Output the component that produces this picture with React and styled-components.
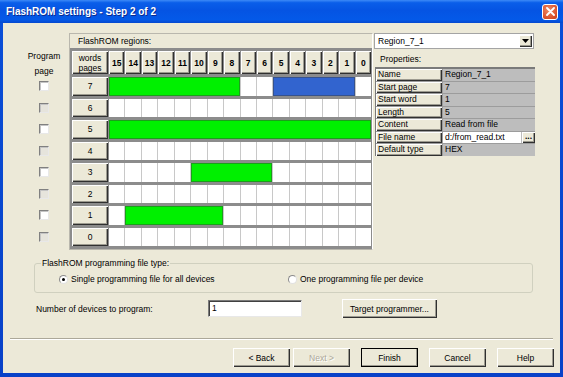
import React from "react";
import styled, { createGlobalStyle } from "styled-components";

const GREEN = "#00f000";
const BLUE = "#3264cf";

const pages = [
  { page: 7, regions: [{ from: 0, len: 8, color: GREEN }, { from: 10, len: 5, color: BLUE }] },
  { page: 6, regions: [] },
  { page: 5, regions: [{ from: 0, len: 16, color: GREEN }] },
  { page: 4, regions: [] },
  { page: 3, regions: [{ from: 5, len: 5, color: GREEN }] },
  { page: 2, regions: [] },
  { page: 1, regions: [{ from: 1, len: 6, color: GREEN }] },
  { page: 0, regions: [] },
];

const words = Array.from({ length: 16 }, (_, i) => 15 - i);

const props = [
  ["Name", "Region_7_1"],
  ["Start page", "7"],
  ["Start word", "1"],
  ["Length", "5"],
  ["Content", "Read from file"],
  ["File name", "d:/from_read.txt", true],
  ["Default type", "HEX"],
];

const GlobalStyle = createGlobalStyle`
  html, body { margin: 0; padding: 0; }
  body {
    width: 563px;
    height: 377px;
    overflow: hidden;
    background: #0842c9;
    font-family: "Liberation Sans", Arial, sans-serif;
    font-size: 8.5px;
    color: #000;
  }
  * { box-sizing: border-box; }
`;

const Window = styled.div`
  width: 563px;
  height: 377px;
  display: flex;
  flex-direction: column;
  background: linear-gradient(#0a4fd8, #0841c8);
`;

const TitleBar = styled.div`
  height: 23px;
  flex: none;
  display: flex;
  align-items: center;
  justify-content: space-between;
  padding: 0 5px 0 6px;
  background: linear-gradient(
    #3d8af7 0%,
    #0a5ee9 12%,
    #0554e3 45%,
    #0459e8 85%,
    #0448cf 100%
  );
`;

const Title = styled.span`
  color: #fff;
  font-weight: bold;
  font-size: 10px;
  text-shadow: 1px 1px #0b2a8f;
`;

const CloseBtn = styled.div`
  width: 16px;
  height: 16px;
  border: 1px solid #fff;
  border-radius: 3px;
  background: radial-gradient(circle at 40% 35%, #f08a66, #d9502a 70%, #c13d1b);
  display: flex;
  align-items: center;
  justify-content: center;
`;

const Client = styled.div`
  flex: 1;
  margin: 0 3px 4px 3px;
  background: #ece9d8;
  display: flex;
  flex-direction: column;
  padding-top: 10px;
`;

const Middle = styled.div`
  display: flex;
  align-items: flex-start;
  margin-left: 18px;
`;

const LeftCol = styled.div`
  width: 46px;
  display: flex;
  flex-direction: column;
  align-items: center;
`;

const ColHead = styled.div`
  height: 44px;
  padding-top: 16px;
  line-height: 15px;
  text-align: center;
`;

const CheckRow = styled.div`
  height: 18.5px;
  margin-bottom: 3px;
  display: flex;
  align-items: center;
  justify-content: center;
`;

const Check = styled.div`
  width: 10px;
  height: 10px;
  border: 1px solid;
  border-color: #808080 #e8e8e8 #e8e8e8 #808080;
  background: ${(p) => (p.$disabled ? "#e6e4dc" : "#fff")};
  box-shadow: inset 1px 1px #c4c4c4;
`;

const Frame = styled.div`
  width: 304px;
  margin-left: 2px;
  border: 1px solid #b9b7ad;
  border-right-color: #fff;
  background: #ece9d8;
`;

const FrameBar = styled.div`
  height: 14px;
  line-height: 14px;
  padding-left: 8px;
`;

const Table = styled.div`
  display: flex;
  flex-direction: column;
  gap: 3px;
  padding: 3px 1px 3px 2px;
  background: #8c8c8c;
`;

const raised = `
  background: #ece9d8;
  box-shadow: inset 1px 1px #fff, inset -1px -1px #303030, inset -2px -2px #9d9b90;
`;

const HeaderRow = styled.div`
  height: 23px;
  display: grid;
  grid-template-columns: 36px repeat(16, 1fr);
  column-gap: 1px;
`;

const HeadCell = styled.div`
  ${raised}
  display: flex;
  flex-direction: column;
  align-items: center;
  justify-content: center;
  font-weight: ${(p) => (p.$bold ? "bold" : "normal")};
  line-height: 10px;
  text-align: center;
`;

const DataRow = styled.div`
  height: 18.5px;
  display: grid;
  grid-template-columns: 36px 1fr;
  column-gap: 1px;
`;

const PageCell = styled.div`
  ${raised}
  display: flex;
  align-items: center;
  justify-content: center;
`;

const Cells = styled.div`
  display: grid;
  grid-template-columns: repeat(16, 1fr);
  column-gap: 1px;
  background: #c8c8c8;
`;

const Cell = styled.div`
  grid-row: 1;
  grid-column: ${(p) => p.$col};
  background: #fff;
`;

const Region = styled.div`
  grid-row: 1;
  grid-column: ${(p) => `${p.$from + 1} / span ${p.$len}`};
  background: ${(p) => p.$color};
  box-shadow: inset 0 0 0 1px rgba(60, 60, 60, 0.45);
`;

const RightPanel = styled.div`
  width: 161px;
  margin-left: 1px;
  display: flex;
  flex-direction: column;
`;

const Combo = styled.div`
  height: 16px;
  width: 160px;
  border: 1px solid #a4a4a4;
  background: #fff;
  display: flex;
  align-items: center;
  justify-content: space-between;
  padding: 0 1px 0 3px;
`;

const ComboBtn = styled.div`
  ${raised}
  width: 13px;
  height: 12px;
  display: flex;
  align-items: center;
  justify-content: center;
`;

const PropLabel = styled.div`
  height: 18px;
  line-height: 16px;
  padding: 2px 0 0 6px;
`;

const PropTable = styled.div`
  width: 160px;
  margin-left: 1px;
  display: grid;
  grid-template-columns: 66px 1fr;
  grid-auto-rows: 11.5px;
  gap: 1px;
  border-top: 2px solid #7a7a7a;
  border-left: 1px solid #7a7a7a;
  background: #9c9c9c;
`;

const PropKey = styled.div`
  ${raised}
  padding-left: 2px;
  line-height: 11.5px;
  white-space: nowrap;
`;

const PropValue = styled.div`
  background: #bdbdbd;
  padding-left: 2px;
  line-height: 11.5px;
  white-space: nowrap;
  display: flex;
  justify-content: space-between;
`;

const FileField = styled.div`
  flex: 1;
  background: #fff;
  margin: 0 1px 0 -2px;
  padding-left: 2px;
`;

const Dots = styled.div`
  ${raised}
  width: 13px;
  font-weight: bold;
  text-align: center;
  line-height: 9px;
`;

const Group = styled.fieldset`
  margin: 8px 27px 0 31px;
  padding: 0 0 2px 24px;
  border: 1px solid #d0d0bf;
  border-radius: 3px;
  min-width: 0;
`;

const Legend = styled.legend`
  margin-left: -18px;
  padding: 0 1px;
  line-height: 10px;
  font-size: 8.5px;
`;

const RadioRow = styled.div`
  height: 22px;
  display: flex;
  align-items: center;
`;

const Option = styled.label`
  display: flex;
  align-items: center;
  gap: 3px;
  width: ${(p) => p.$width || "auto"};
`;

const Radio = styled.span`
  width: 9px;
  height: 9px;
  border-radius: 50%;
  border: 1px solid #8a8a8a;
  border-bottom-color: #e0e0e0;
  border-right-color: #e0e0e0;
  background: #fff;
  display: flex;
  align-items: center;
  justify-content: center;

  &::after {
    content: "";
    width: 3px;
    height: 3px;
    border-radius: 50%;
    background: ${(p) => (p.$checked ? "#000" : "transparent")};
  }
`;

const NumberRow = styled.div`
  display: flex;
  align-items: center;
  height: 19px;
  margin-top: 6px;
  padding-left: 33px;
`;

const NumberLabel = styled.span`
  width: 172px;
`;

const Input = styled.div`
  width: 94px;
  height: 17px;
  background: #fff;
  border: 1px solid;
  border-color: #7a7a7a #e8e8e8 #e8e8e8 #7a7a7a;
  box-shadow: inset 1px 1px #404040;
  padding: 0 3px;
  line-height: 15px;
`;

const Button = styled.div`
  ${raised}
  width: ${(p) => p.$width || "57px"};
  height: 19px;
  display: flex;
  align-items: center;
  justify-content: center;
  color: ${(p) => (p.$disabled ? "#aca899" : "#000")};
  text-shadow: ${(p) => (p.$disabled ? "1px 1px #fff" : "none")};
  outline: ${(p) => (p.$default ? "1px solid #000" : "none")};
  outline-offset: -1px;
`;

const Separator = styled.div`
  margin: 20px 7px 0 7px;
  height: 2px;
  border-top: 1px solid #aca899;
  border-bottom: 1px solid #fff;
`;

const ButtonRow = styled.div`
  display: flex;
  justify-content: flex-end;
  gap: 11px;
  margin-top: 8px;
  padding-right: 6px;
`;

const Pair = styled.div`
  display: flex;
  gap: 3px;
`;

export default function App() {
  return (
    <>
      <GlobalStyle />
      <Window>
        <TitleBar>
          <Title>FlashROM settings - Step 2 of 2</Title>
          <CloseBtn>
            <svg width="9" height="9" viewBox="0 0 9 9">
              <path d="M1 1L8 8M8 1L1 8" stroke="#fff" strokeWidth="1.8" strokeLinecap="round" />
            </svg>
          </CloseBtn>
        </TitleBar>
        <Client>
          <Middle>
            <LeftCol>
              <ColHead>
                Program
                <br />
                page
              </ColHead>
              {pages.map((p) => (
                <CheckRow key={p.page}>
                  <Check $disabled={p.regions.length === 0} />
                </CheckRow>
              ))}
            </LeftCol>
            <Frame>
              <FrameBar>FlashROM regions:</FrameBar>
              <Table>
                <HeaderRow>
                  <HeadCell>
                    <span>words</span>
                    <span>pages</span>
                  </HeadCell>
                  {words.map((w) => (
                    <HeadCell key={w} $bold>
                      {w}
                    </HeadCell>
                  ))}
                </HeaderRow>
                {pages.map((p) => (
                  <DataRow key={p.page}>
                    <PageCell>{p.page}</PageCell>
                    <Cells>
                      {words.map((w, i) => (
                        <Cell key={w} $col={i + 1} />
                      ))}
                      {p.regions.map((r) => (
                        <Region key={r.from} $from={r.from} $len={r.len} $color={r.color} />
                      ))}
                    </Cells>
                  </DataRow>
                ))}
              </Table>
            </Frame>
            <RightPanel>
              <Combo>
                <span>Region_7_1</span>
                <ComboBtn>
                  <svg width="7" height="4" viewBox="0 0 7 4">
                    <path d="M0 0H7L3.5 4Z" fill="#000" />
                  </svg>
                </ComboBtn>
              </Combo>
              <PropLabel>Properties:</PropLabel>
              <PropTable>
                {props.map(([k, v, file]) => (
                  <React.Fragment key={k}>
                    <PropKey>{k}</PropKey>
                    <PropValue>
                      {file ? (
                        <>
                          <FileField>{v}</FileField>
                          <Dots>...</Dots>
                        </>
                      ) : (
                        v
                      )}
                    </PropValue>
                  </React.Fragment>
                ))}
              </PropTable>
            </RightPanel>
          </Middle>

          <Group>
            <Legend>FlashROM programming file type:</Legend>
            <RadioRow>
              <Option $width="229px">
                <Radio $checked />
                Single programming file for all devices
              </Option>
              <Option>
                <Radio />
                One programming file per device
              </Option>
            </RadioRow>
          </Group>

          <NumberRow>
            <NumberLabel>Number of devices to program:</NumberLabel>
            <Input>1</Input>
            <Button $width="95px" style={{ marginLeft: 40 }}>
              Target programmer...
            </Button>
          </NumberRow>

          <Separator />

          <ButtonRow>
            <Pair>
              <Button>&lt; Back</Button>
              <Button $disabled>Next &gt;</Button>
            </Pair>
            <Button $default>Finish</Button>
            <Button>Cancel</Button>
            <Button>Help</Button>
          </ButtonRow>
        </Client>
      </Window>
    </>
  );
}
